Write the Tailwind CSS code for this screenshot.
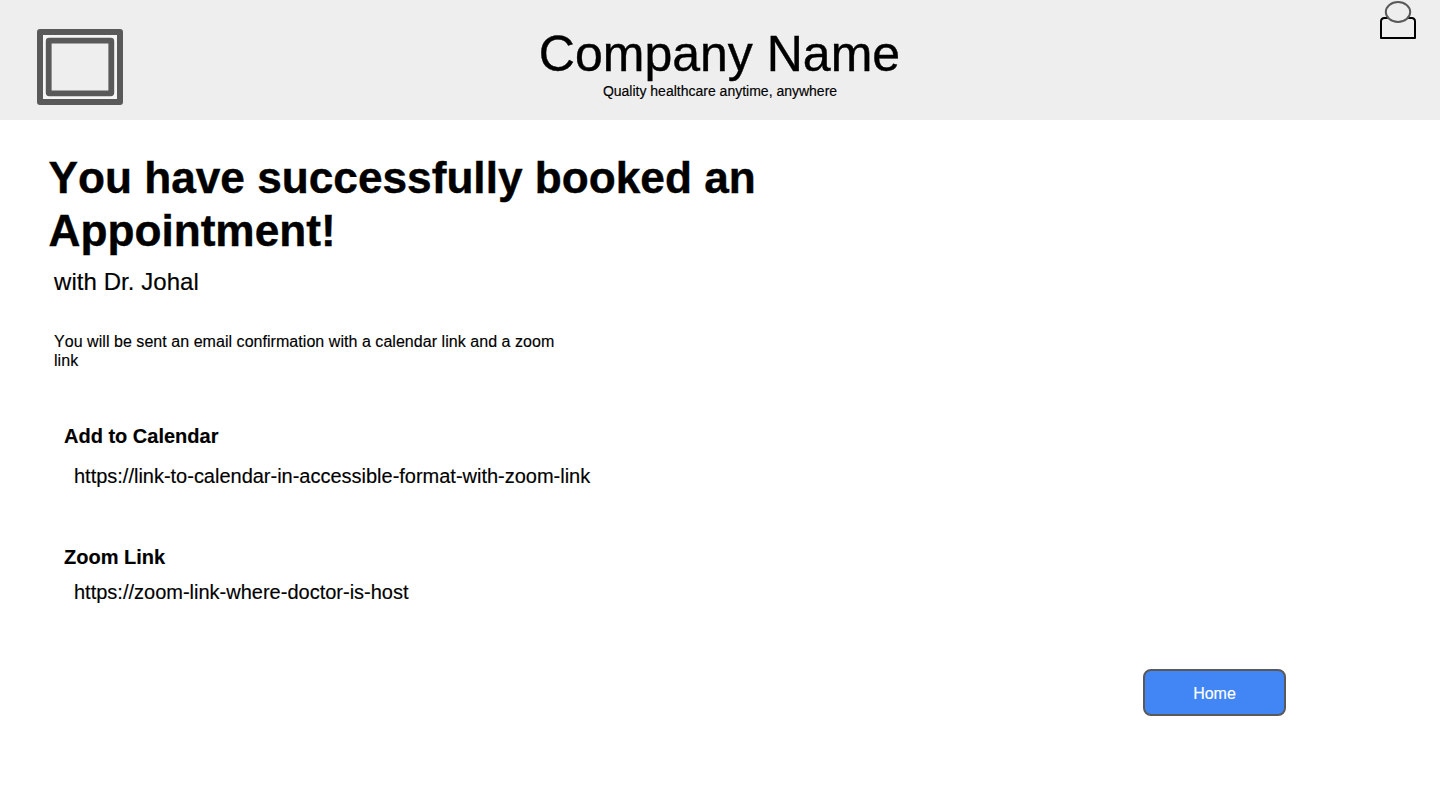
<!DOCTYPE html>
<html lang="en"><head><meta charset="utf-8"><title>Appointment booked</title>
<script src="https://cdn.jsdelivr.net/npm/@tailwindcss/browser@4"></script></head>
<body class="h-[810px] overflow-hidden bg-white font-['Liberation_Sans',Arial,sans-serif] text-black">
<header class="grid h-[120px] grid-cols-[1fr_auto_1fr] bg-[#eeeeee]">
<svg class="mt-[29px] ml-[37px] h-[76px] w-[86px]" viewBox="0 0 86 76" fill="none" stroke="#595959" stroke-width="6" stroke-linejoin="round"><rect x="3" y="3" width="80" height="70" fill="#f5f5f5"/><rect x="11.7" y="11.7" width="62.6" height="52.6" rx="0.5" fill="#eeeeee" stroke-width="5.8"/></svg>
<div class="pt-[26px] text-center"><div class="pr-px text-[50px] leading-[56px] whitespace-nowrap [-webkit-text-stroke:0.4px_#000]">Company Name</div><div class="text-[14px] leading-[18px] [-webkit-text-stroke:0.15px_#000]">Quality healthcare anytime, anywhere</div></div>
<svg class="mr-[23px] h-10 w-[38px] justify-self-end" viewBox="0 0 38 40" stroke-width="2" stroke-linejoin="round"><path d="M2 38V21.5Q2 18 5.5 18H32.5Q36 18 36 21.5V38Z" fill="#eeeeee" stroke="#000"/><ellipse cx="19" cy="12" rx="12.2" ry="10" fill="#eeeeee" stroke="#595959"/></svg>
</header>
<main class="pl-[49px] [-webkit-text-stroke:0.15px_currentColor]">
<h1 class="-ml-px w-[740px] pt-[31px] pl-[0.5px] text-[44.2px] leading-[53px] font-bold [font-kerning:none] [-webkit-text-stroke:0.4px_#000]">You have successfully booked an Appointment!</h1>
<p class="mt-[10px] pl-[5px] text-[24px] leading-[30px] tracking-[0.06px]">with Dr. Johal</p>
<p class="mt-[35px] w-[520px] pl-[5px] text-[16px] leading-[19px] tracking-[0.045px] [font-kerning:none]">You will be sent an email confirmation with a calendar link and a zoom link</p>
<h2 class="mt-[53px] pl-[15px] text-[20px] leading-[26px] font-bold">Add to Calendar</h2>
<p class="mt-[14px] pl-[25px] text-[20px] leading-[26px] tracking-[-0.01px]">https://link-to-calendar-in-accessible-format-with-zoom-link</p>
<h2 class="mt-[55px] pl-[15px] text-[20px] leading-[26px] font-bold">Zoom Link</h2>
<p class="mt-[9px] pl-[25px] text-[20px] leading-[26px]">https://zoom-link-where-doctor-is-host</p>
<div class="mt-[64px] flex justify-end pr-[154px]"><button class="h-[47px] w-[143px] rounded-[8px] border-2 border-[#595959] bg-[#4285f4] pt-[3px] text-[16px] text-white">Home</button></div>
</main></body></html>
